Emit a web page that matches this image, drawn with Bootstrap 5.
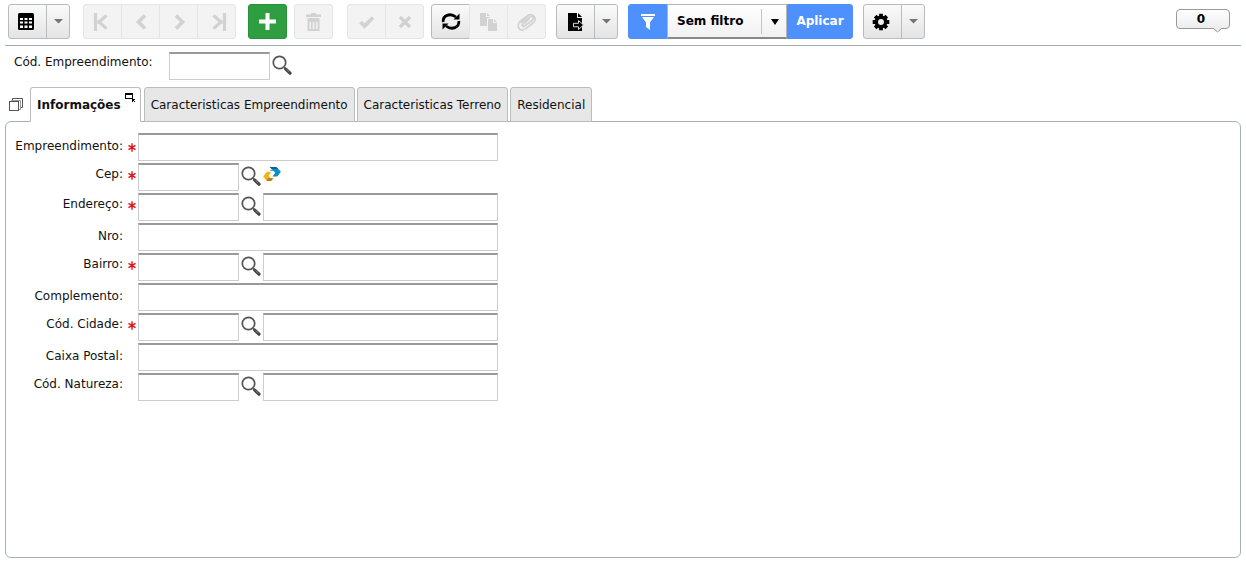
<!DOCTYPE html>
<html lang="pt-BR">
<head>
<meta charset="utf-8">
<meta name="viewport" content="width=device-width, initial-scale=1">
<title>Empreendimento</title>
<link href="https://cdn.jsdelivr.net/npm/bootstrap@5.3.0/dist/css/bootstrap.min.css" rel="stylesheet">
<style>
  body { font: 12px/16px "DejaVu Sans", Verdana, sans-serif; color: #111; background: #fff; padding: 0 5px 7px; }
  svg { display: block; }
  .toolbar { min-height: 46px; padding: 4px 11px 6px 3px; border-bottom: 1px solid #a2abab; }
  .g-7 { margin-left: 7px; } .g-10 { margin-left: 10px; } .g-12 { margin-left: 12px; } .g-14 { margin-left: 14px; }
  .tool { height: 35px; width: 39px; padding: 0; border: 1px solid #b9bcbe; border-radius: 3px; color: #000;
    background: linear-gradient(#fafafa, #e4e4e4); display: flex; align-items: center; justify-content: center; }
  .tool:disabled { color: #d2d2d2; background: #f3f3f3; border-color: #e5e5e5; opacity: 1; }
  .btn-group > .tool { flex: none; }
  .tool.drop { width: 24px; color: #777; }
  .tool.add, .tool.add:hover { background: #2f9e41; border-color: #27923a; color: #fff; }
  .tool.blue, .tool.blue:hover { background: #4d90fe; border-color: #4d90fe; color: #fff; }
  .tool.apply { width: 66px; font-size: 12px; font-weight: bold; padding-bottom: 2px; }
  .nav-keys { margin-left: 13px; }
  .filter-box { position: relative; width: 120px; height: 35px; color: #000; }
  .filter-box select { appearance: none; width: 100%; height: 100%; border: 1px solid #b5b5b5; border-bottom: 2px solid #888; border-radius: 0;
    background: linear-gradient(#fff, #f1f1f1); padding: 0 28px 1px 9px; font-size: 12px; font-weight: bold; color: #000; }
  .filter-box span { position: absolute; right: 0; top: 5px; bottom: 5px; width: 26px; border-left: 1px solid #c4c4c4; pointer-events: none; display: flex; align-items: center; justify-content: center; }
  .counter { position: relative; width: 54px; height: 20px; margin-top: 5px; padding: 0 4px 0 0; border: 1px solid #999; border-radius: 4px;
    background: linear-gradient(#fff, #ededed); font-size: 12px; line-height: 18px; font-weight: bold; color: #000; }
  .counter svg { position: absolute; right: 6px; top: 17px; }
  .key-row { padding: 6px 0 0 9px; height: 41px; }
  .key-row label { width: 155px; padding-top: 2px; }
  .field { height: 28px; min-width: 0; padding: 2px 4px; border: 1px solid #ccc; border-top: 2px solid #999; border-radius: 0; background: #fff; font-size: 12px; }
  .code { width: 101px; flex: none; }
  .lens { width: 24px; padding: 2px 0 0 2px; border: 0; background: none; flex: none; }
  .key-row .lens { padding-top: 3px; }
  .tabs { height: 35px; padding-left: 4px; margin-bottom: -1px; }
  .tabs .stack { width: 21px; height: 35px; padding: 0; border: 0; background: none; }
  .tab-btn { position: relative; height: 35px; padding: 0 6px; border: 1px solid #b9bdbd; border-radius: 3px 3px 0 0; background: #e7e7e7; color: #111; font-size: 12px; margin-right: 2px; white-space: nowrap; }
  .tab-btn.active { background: #fff; border-bottom-color: #fff; font-weight: bold; padding-right: 19px; margin-right: 3px; }
  .tab-btn svg { position: absolute; top: 5px; right: 5px; }
  .panel { border: 1px solid #a8b0b0; border-radius: 6px; padding: 11px 0 20px 0; }
  .line { height: 28px; margin-bottom: 2px; max-width: 492px; }
  .line label { width: 117px; flex: none; text-align: right; padding-top: 5px; }
  .line.look label { padding-top: 3px; }
  .line .lens { padding-top: 3px; }
  .req { width: 15px; flex: none; padding: 10px 0 0 5px; }
  .look .req { padding-top: 8px; }
</style>
</head>
<body class="d-flex flex-column min-vh-100">

<svg width="0" height="0" class="position-absolute" aria-hidden="true">
  <symbol id="lens" viewBox="0 0 20 20">
    <circle cx="7.5" cy="7.5" r="6.2" fill="#fff" stroke="#555" stroke-width="1.7"/>
    <path d="M11.8 12l2.3 2.2" stroke="#666" stroke-width="1.8"/>
    <path d="M13.8 14.2l4.2 4" stroke="#444" stroke-width="3.2" stroke-linecap="round"/>
    <path d="M14.4 14.2l2.8 2.7" stroke="#999" stroke-width=".8"/>
  </symbol>
  <symbol id="down" viewBox="0 0 9 5"><path d="M0 0h9L4.5 4.5z" fill="currentColor"/></symbol>
  <symbol id="star" viewBox="0 0 8 9"><path d="M4 .3v8.400M.5 2.300l7 4.400M7.500 2.300l-7 4.400" stroke="#dc1418" stroke-width="1.400" fill="none"/></symbol>
</svg>

<header class="toolbar d-flex align-items-start">
  <div class="btn-group">
    <button class="tool btn pe-1" aria-label="Grade"><svg width="16" height="17" viewBox="0 0 16 17"><rect width="16" height="17" rx="1.500"/><g fill="#fff"><path d="M2 5h3v2H2zM6.500 5h3v2h-3zM11 5h3v2h-3zM2 8.500h3v2H2zM6.500 8.500h3v2h-3zM11 8.500h3v2h-3zM2 12.500h3v2.500H2zM6.500 12.500h3v2.500h-3zM11 12.500h3v2.500h-3z"/></g></svg></button>
    <button class="tool drop btn" aria-label="Opções da grade"><svg width="9" height="5"><use href="#down"/></svg></button>
  </div>
  <div class="btn-group nav-keys">
    <button class="tool btn pe-1" disabled aria-label="Primeiro"><svg width="16" height="18" viewBox="0 0 16 18" fill="none" stroke="currentColor" stroke-width="3.200"><path d="M2.500 0v18M13.500 2.500L6 9l7.500 6.500M3 9h4"/></svg></button>
    <button class="tool btn" disabled aria-label="Anterior"><svg width="16" height="16" viewBox="0 0 16 16" fill="none" stroke="currentColor" stroke-width="3.600"><path d="M12 1.500L5.500 8l6.500 6.500"/></svg></button>
    <button class="tool btn" disabled aria-label="Próximo"><svg width="16" height="16" viewBox="0 0 16 16" fill="none" stroke="currentColor" stroke-width="3.600"><path d="M5 1.500L11.500 8 5 14.500"/></svg></button>
    <button class="tool btn ps-1" disabled aria-label="Último"><svg width="16" height="18" viewBox="0 0 16 18" fill="none" stroke="currentColor" stroke-width="3.200"><path d="M13.500 0v18M2.500 2.500L10 9l-7.500 6.500M9 9h4"/></svg></button>
  </div>
  <button class="tool add btn g-12" aria-label="Incluir"><svg width="17" height="17" viewBox="0 0 17 17"><path d="M8.500 0v17M0 8.500h17" stroke="#fff" stroke-width="4"/></svg></button>
  <button class="tool btn g-7" disabled aria-label="Excluir"><svg width="16" height="18" viewBox="0 0 16 18" fill="currentColor"><path d="M5 0h5v1.500h5V4H0V1.500h5zM1.500 5h12v13h-12zM3.500 9v7H5V9zm3.300 0v7h1.500V9zM10 9v7h1.500V9z" fill-rule="evenodd"/></svg></button>
  <div class="btn-group g-14">
    <button class="tool btn" disabled aria-label="Confirmar"><svg width="16" height="14" viewBox="0 0 16 14" fill="none" stroke="currentColor" stroke-width="3.800"><path d="M1.500 7l4 4L14 2.500"/></svg></button>
    <button class="tool btn" disabled aria-label="Cancelar"><svg width="14" height="14" viewBox="0 0 14 14" fill="none" stroke="currentColor" stroke-width="3.400"><path d="M2 2l10 10M12 2L2 12"/></svg></button>
  </div>
  <div class="btn-group g-7">
    <button class="tool btn" aria-label="Atualizar"><svg width="20" height="19" viewBox="0 0 20 19"><g fill="none" stroke="#000" stroke-width="2.800"><path d="M2.200 10C1.500 3.500 9 .5 15 5M17.800 9c.7 6.500-6.800 9.500-12.800 5"/></g><path d="M18.500 1.500V7.500h-6zM1.500 17.500v-6h6z"/></svg></button>
    <button class="tool btn" disabled aria-label="Copiar"><svg width="18" height="18" viewBox="0 0 18 18" fill="currentColor"><path d="M0 0h6v4h4v1H7v8H0zM7 0l3 3H7zM8 6h5v4h4v8H8zM14 6l3 3h-3z"/></svg></button>
    <button class="tool btn" disabled aria-label="Anexar"><svg width="19" height="18" viewBox="0 0 19 18" fill="none" stroke="currentColor" stroke-width="1.700" stroke-linecap="round"><path d="M12 6L5.500 11.500c-1 1.500.5 2.500 2 1.500L15 7.500c2.500-2.500.5-5-2.500-3.500L4.500 9.500M9 15.500l7.500-6C20 6 17 0 11.500 2L3 8.500C-1 13 2.500 18.500 7 16.500"/></svg></button>
  </div>
  <div class="btn-group g-10">
    <button class="tool btn" aria-label="Exportar"><svg width="16" height="18" viewBox="0 0 16 18"><path d="M0 0h9v5h5v13H0zM10 0l4 4h-4z"/><path d="M5.500 10.300h5V7.500l5 4.500-5 4.500v-2.700h-5z" stroke="#f0f0f0" stroke-width=".9"/></svg></button>
    <button class="tool drop btn" aria-label="Opções de exportação"><svg width="9" height="5"><use href="#down"/></svg></button>
  </div>
  <div class="d-flex g-10">
    <button class="tool blue btn rounded-end-0" aria-label="Filtro"><svg width="14" height="16" viewBox="0 0 14 16"><path d="M0 0h14v2H0zM1 3h12L9 8.500V16l-4-3V8.500z" fill="#fff"/></svg></button>
    <div class="filter-box"><select aria-label="Selecionar filtro"><option>Sem filtro</option></select><span><svg width="8" height="6" viewBox="0 0 8 6"><path d="M0 0h8L4 6z"/></svg></span></div>
    <button class="tool blue apply btn rounded-start-0">Aplicar</button>
  </div>
  <div class="btn-group g-10">
    <button class="tool btn pe-1" aria-label="Configurações"><svg width="18" height="18" viewBox="-9 -9 18 18"><g stroke="#000" stroke-width="3.800"><path d="M0-8.300V-4M0 8.300V4M-8.300 0H-4M8.300 0H4"/><path d="M-5.800-5.800l3 3M5.800 5.800l-3-3M-5.800 5.800l3-3M5.800-5.800l-3 3"/></g><circle r="4.700" fill="#f2f2f2" stroke="#000" stroke-width="3.500"/></svg></button>
    <button class="tool drop btn" aria-label="Opções de configuração"><svg width="9" height="5"><use href="#down"/></svg></button>
  </div>
  <button class="counter ms-auto" aria-label="Mensagens: 0">0<svg width="11" height="6" viewBox="0 0 11 6"><path d="M1 1l4.500 4L10 1" fill="#ededed" stroke="#999"/><path d="M1 0h9v1H1z" fill="#ededed"/></svg></button>
</header>

<main class="d-flex flex-column flex-grow-1">
  <div class="key-row d-flex align-items-start">
    <label for="cod">Cód. Empreendimento:</label>
    <input id="cod" class="field code">
    <button class="lens" aria-label="Pesquisar empreendimento"><svg width="20" height="20"><use href="#lens"/></svg></button>
  </div>

  <div class="tabs d-flex" role="tablist">
    <button class="stack" aria-label="Exibir todas as abas"><svg width="14" height="14" viewBox="0 0 14 14" fill="#fff" stroke="#555"><path d="M3.500 3.500v-3h10v9h-3"/><path d="M2.500 5.500v-3h9v9h-2" stroke="#999"/><rect x=".5" y="3.500" width="9" height="9"/></svg></button>
    <button class="tab-btn active" role="tab" aria-selected="true">Informações<svg width="10" height="9" viewBox="0 0 10 9"><path d="M1 1h6v4H1zM0 0v6h8V0z" fill-rule="evenodd"/><path d="M0 0h8v2H0zM7 6h3v1H9v1h1v1H9V8H8v1H7z"/></svg></button>
    <button class="tab-btn" role="tab">Caracteristicas Empreendimento</button>
    <button class="tab-btn" role="tab">Caracteristicas Terreno</button>
    <button class="tab-btn" role="tab">Residencial</button>
  </div>

  <section class="panel flex-grow-1">
    <div class="line d-flex align-items-start">
      <label for="emp">Empreendimento:</label><span class="req"><svg width="8" height="9"><use href="#star"/></svg></span>
      <input id="emp" class="field flex-grow-1" required>
    </div>
    <div class="line look d-flex align-items-start">
      <label for="cep">Cep:</label><span class="req"><svg width="8" height="9"><use href="#star"/></svg></span>
      <input id="cep" class="field code" required>
      <button class="lens" aria-label="Pesquisar CEP"><svg width="20" height="20"><use href="#lens"/></svg></button>
      <button class="lens p-0 pt-1" aria-label="Consultar Correios"><svg width="18" height="16" viewBox="0 0 19 17"><path d="M7 0h7l5 5-4 5h-5l3-4-2-2H7l3-2z" fill="#0b8fc4"/><path d="M7 0h7l2 2H9z" fill="#07639b"/><path d="M4 5h5L6 9l2 3h3l-2 3H4L0 10z" fill="#f0b51c"/><path d="M5 12h6l-3 3H4z" fill="#b87a12"/></svg></button>
    </div>
    <div class="line look d-flex align-items-start">
      <label for="end">Endereço:</label><span class="req"><svg width="8" height="9"><use href="#star"/></svg></span>
      <input id="end" class="field code" required>
      <button class="lens" aria-label="Pesquisar endereço"><svg width="20" height="20"><use href="#lens"/></svg></button>
      <input class="field flex-grow-1" aria-label="Descrição do endereço">
    </div>
    <div class="line d-flex align-items-start">
      <label for="nro">Nro:</label><span class="req"></span>
      <input id="nro" class="field flex-grow-1">
    </div>
    <div class="line look d-flex align-items-start">
      <label for="bai">Bairro:</label><span class="req"><svg width="8" height="9"><use href="#star"/></svg></span>
      <input id="bai" class="field code" required>
      <button class="lens" aria-label="Pesquisar bairro"><svg width="20" height="20"><use href="#lens"/></svg></button>
      <input class="field flex-grow-1" aria-label="Nome do bairro">
    </div>
    <div class="line d-flex align-items-start">
      <label for="com">Complemento:</label><span class="req"></span>
      <input id="com" class="field flex-grow-1">
    </div>
    <div class="line look d-flex align-items-start">
      <label for="cid">Cód. Cidade:</label><span class="req"><svg width="8" height="9"><use href="#star"/></svg></span>
      <input id="cid" class="field code" required>
      <button class="lens" aria-label="Pesquisar cidade"><svg width="20" height="20"><use href="#lens"/></svg></button>
      <input class="field flex-grow-1" aria-label="Nome da cidade">
    </div>
    <div class="line d-flex align-items-start">
      <label for="cxp">Caixa Postal:</label><span class="req"></span>
      <input id="cxp" class="field flex-grow-1">
    </div>
    <div class="line look d-flex align-items-start">
      <label for="nat">Cód. Natureza:</label><span class="req"></span>
      <input id="nat" class="field code">
      <button class="lens" aria-label="Pesquisar natureza"><svg width="20" height="20"><use href="#lens"/></svg></button>
      <input class="field flex-grow-1" aria-label="Descrição da natureza">
    </div>
  </section>
</main>

<script src="https://cdn.jsdelivr.net/npm/bootstrap@5.3.0/dist/js/bootstrap.bundle.min.js"></script>
</body>
</html>
